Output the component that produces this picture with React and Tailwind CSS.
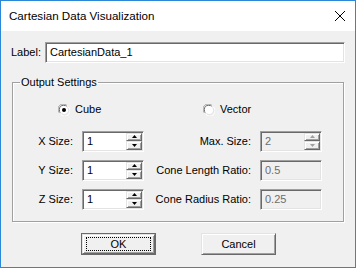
import React from 'react'

const sunken = 'border-t border-l border-[#a0a0a0] border-b border-r border-b-white border-r-white shadow-[inset_1px_1px_0_#696969,inset_-1px_-1px_0_#e3e3e3]'
const raised = 'border border-t-[#e3e3e3] border-l-[#e3e3e3] border-b-[#696969] border-r-[#696969] shadow-[inset_1px_1px_0_#fff,inset_-1px_-1px_0_#a0a0a0]'

function Arrow({ up, disabled }) {
  return (
    <svg width="5" height="3" viewBox="0 0 5 3">
      {up
        ? <polygon points="2.5,0 5,3 0,3" fill={disabled ? '#a0a0a0' : '#000'} />
        : <polygon points="0,0 5,0 2.5,3" fill={disabled ? '#a0a0a0' : '#000'} />}
    </svg>
  )
}

function SpinBox({ value, disabled }) {
  return (
    <div className={`${sunken} w-[62px] h-[21px] flex items-stretch ${disabled ? 'bg-[#f0f0f0] text-[#6d6d6d]' : 'bg-white text-black'}`}>
      <div className="flex-1 flex items-center pl-[4px]">{value}</div>
      <div className="w-[17px] flex flex-col py-[1px] pr-[1px]">
        <div className={`${raised} flex-1 flex items-center justify-center bg-[#f0f0f0]`}><Arrow up disabled={disabled} /></div>
        <div className={`${raised} flex-1 flex items-center justify-center bg-[#f0f0f0]`}><Arrow disabled={disabled} /></div>
      </div>
    </div>
  )
}

function TextBox({ value }) {
  return (
    <div className={`${sunken} w-[62px] h-[21px] bg-[#f0f0f0] text-[#6d6d6d] flex items-center pl-[4px]`}>{value}</div>
  )
}

function Radio({ checked }) {
  return (
    <svg width="12" height="12" viewBox="0 0 12 12">
      <path d="M1.5 9 A5 5 0 0 1 9 1.5" stroke="#a0a0a0" strokeWidth="1" fill="none" />
      <path d="M2.5 8.5 A4 4 0 0 1 8.5 2.5" stroke="#696969" strokeWidth="1" fill="none" />
      <circle cx="6" cy="6" r="4" fill="#fff" />
      <path d="M10.5 3 A5 5 0 0 1 3 10.5" stroke="#fff" strokeWidth="1" fill="none" />
      <path d="M9.5 3.5 A4 4 0 0 1 3.5 9.5" stroke="#e3e3e3" strokeWidth="1" fill="none" />
      {checked && <circle cx="6" cy="6" r="2" fill="#000" />}
    </svg>
  )
}

export default function App() {
  return (
    <div className="w-[356px] h-[268px] border border-[#2b88d8] flex flex-col text-[11px] text-black" style={{ fontFamily: '"Liberation Sans", Arial, sans-serif' }}>
      {/* barra de título */}
      <div className="h-[30px] bg-white flex items-center justify-between pl-[8px] pr-[10px]">
        <span className="text-[11.6px]">Cartesian Data Visualization</span>
        <svg width="10" height="10" viewBox="0 0 10 10">
          <path d="M0 0 L10 10 M10 0 L0 10" stroke="#000" strokeWidth="1" />
        </svg>
      </div>

      <div className="flex-1 bg-[#f0f0f0] flex flex-col pl-[10px]">
        <div className="flex items-center mt-[11px] h-[21px]">
          <span className="w-[34px]">Label:</span>
          <div className={`${sunken} w-[300px] h-[21px] bg-white flex items-center pl-[4px]`}>CartesianData_1</div>
        </div>

        <fieldset className="mt-[11px] ml-[1px] w-[332px] h-[148px] border border-[#a0a0a0] shadow-[inset_1px_1px_0_#fff,1px_1px_0_#fff]">
          <legend className="ml-[7px] px-[1px]">Output Settings</legend>

          <div className="flex items-center mt-[12px] h-[14px]">
            <div className="ml-[45px] flex items-center gap-[5px] w-[145px]"><Radio checked /><span>Cube</span></div>
            <div className="flex items-center gap-[5px]"><Radio /><span>Vector</span></div>
          </div>

          <div className="grid grid-cols-[60px_62px_98px_62px] gap-x-[9px] gap-y-[8px] mt-[14px] items-center">
            <span className="text-right">X Size:</span>
            <SpinBox value="1" />
            <span className="text-right">Max. Size:</span>
            <SpinBox value="2" disabled />

            <span className="text-right">Y Size:</span>
            <SpinBox value="1" />
            <span className="text-right">Cone Length Ratio:</span>
            <TextBox value="0.5" />

            <span className="text-right">Z Size:</span>
            <SpinBox value="1" />
            <span className="text-right">Cone Radius Ratio:</span>
            <TextBox value="0.25" />
          </div>
        </fieldset>

        <div className="flex mt-[11px] ml-[70px] gap-[45px]">
          <div className="w-[75px] h-[22px] border border-[#696969] flex">
            <div className={`${raised} flex-1 flex items-center justify-center`}>
              <div className="w-[65px] h-[14px] border border-dotted border-black flex items-center justify-center">OK</div>
            </div>
          </div>
          <div className={`${raised} w-[75px] h-[22px] flex items-center justify-center`}>Cancel</div>
        </div>
      </div>
    </div>
  )
}
